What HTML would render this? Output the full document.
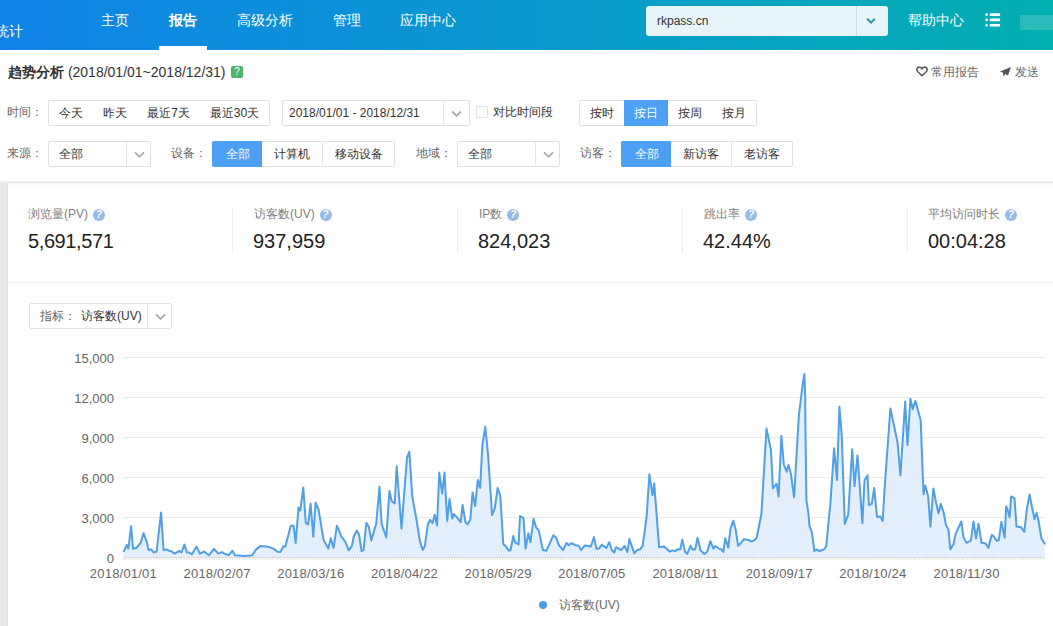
<!DOCTYPE html>
<html><head><meta charset="utf-8">
<style>
*{margin:0;padding:0;box-sizing:border-box}
html,body{width:1053px;height:626px;overflow:hidden;background:#fff;font-family:"Liberation Sans",sans-serif;color:#333}
.abs{position:absolute}
#hdr{position:absolute;left:0;top:0;width:1053px;height:50px;background:linear-gradient(90deg,#1083e8 0%,#0a99cf 50%,#02afb0 100%)}
.nav{position:absolute;top:11px;font-size:14px;line-height:18px;color:#fff;white-space:nowrap}
.ind{position:absolute;left:159px;top:46px;width:48px;height:4px;background:#fff}
#site{position:absolute;left:646px;top:6px;width:242px;height:30px;border-radius:3px;background:#e7f5f8}
#site .t{position:absolute;left:11px;top:8px;font-size:12px;line-height:15px;color:#333}
#site .dv{position:absolute;left:210px;top:0;width:1px;height:30px;background:#c9dfe3}
#filter{position:absolute;left:0;top:50px;width:1053px;height:132px;background:#fff}
.lbl{position:absolute;font-size:12px;line-height:16px;color:#666;white-space:nowrap}
.txt{position:absolute;font-size:12px;line-height:16px;color:#333;white-space:nowrap}
.box{position:absolute;border:1px solid #e1e1e1;border-radius:2px;background:#fff}
.act{position:absolute;background:#4ca0f5}
.sep{position:absolute;width:1px;background:#e6e6e6}
#grey{position:absolute;left:0;top:182px;width:8px;height:444px;background:#e9e9e9}
.card-l{position:absolute;top:206px;font-size:12px;line-height:16px;color:#808080;white-space:nowrap}
.card-v{position:absolute;top:229px;font-size:20px;line-height:24px;color:#222;white-space:nowrap}
.q{display:inline-block;width:12px;height:12px;border-radius:50%;background:#96bae6;vertical-align:-3px;margin-left:5px;position:relative}
.q:after{content:"?";position:absolute;left:0;top:0;width:12px;text-align:center;font-size:10px;line-height:12px;color:#fff;font-weight:bold}
.vd{position:absolute;top:208px;width:1px;height:45px;background:#eee}
.yl{position:absolute;right:939px;font-size:13px;line-height:15px;color:#666;text-align:right;white-space:nowrap}
.xl{position:absolute;top:566px;font-size:13px;line-height:15px;color:#666;white-space:nowrap;width:100px;text-align:center;letter-spacing:0.2px}
.grp{display:flex;border:none!important;background:none!important}
.grp span{display:block;height:26px;line-height:24px;text-align:center;font-size:12px;color:#333;white-space:nowrap;border-top:1px solid #e1e1e1;border-bottom:1px solid #e1e1e1;background:#fff}
.grp span:first-child{border-left:1px solid #e1e1e1;border-radius:2px 0 0 2px}
.grp span:last-child{border-right:1px solid #e1e1e1;border-radius:0 2px 2px 0}
.grp span.on{background:#4ca0f5;color:#fff;border-color:#4ca0f5}
.grp span.bl{border-left:1px solid #e6e6e6}
.grp span.on+span.bl{border-left:none}
</style></head><body>
<div id="hdr">
  <div class="nav" style="left:-5px;top:22px">统计</div>
  <div class="nav" style="left:101px">主页</div>
  <div class="nav" style="left:169px;font-weight:bold">报告</div>
  <div class="nav" style="left:237px">高级分析</div>
  <div class="nav" style="left:333px">管理</div>
  <div class="nav" style="left:400px">应用中心</div>
  <div class="ind"></div>
  <div id="site"><div class="t">rkpass.cn</div><div class="dv"></div>
    <svg class="abs" style="left:220px;top:11px" width="10" height="8" viewBox="0 0 10 8"><path d="M1.2 1.8 L5 5.6 L8.8 1.8" fill="none" stroke="#27999c" stroke-width="2"/></svg>
  </div>
  <div class="nav" style="left:908px">帮助中心</div>
  <svg class="abs" style="left:985px;top:13px" width="16" height="14" viewBox="0 0 16 14">
    <rect x="0.3" y="0.3" width="2.6" height="2.6" rx="1" fill="#fff"/><rect x="4.6" y="0.3" width="10.6" height="2.6" rx="1" fill="#fff"/>
    <rect x="0.3" y="5.6" width="2.6" height="2.6" rx="1" fill="#fff"/><rect x="4.6" y="5.6" width="10.6" height="2.6" rx="1" fill="#fff"/>
    <rect x="0.3" y="10.9" width="2.6" height="2.6" rx="1" fill="#fff"/><rect x="4.6" y="10.9" width="10.6" height="2.6" rx="1" fill="#fff"/>
  </svg>
  <div class="abs" style="left:1020px;top:15px;width:33px;height:15px;background:#2bbbbb"></div>
</div>

<div id="filter">
  <div class="abs" style="left:8px;top:13px;font-size:14px;line-height:18px;color:#333;white-space:nowrap"><b>趋势分析</b> (2018/01/01~2018/12/31)</div>
  <div class="abs" style="left:231px;top:16px;width:12px;height:12px;border-radius:2px;background:#4db36a;color:#fff;font-size:10px;line-height:12px;text-align:center">?</div>
  <svg class="abs" style="left:916px;top:16px" width="12" height="11" viewBox="0 0 12 11"><path d="M6 9.8 L1.6 5.5 C0.3 4.1 0.7 1.1 3.3 1.1 C4.6 1.1 5.5 2 6 2.9 C6.5 2 7.4 1.1 8.7 1.1 C11.3 1.1 11.7 4.1 10.4 5.5 Z" fill="none" stroke="#5a5a5a" stroke-width="1.6" stroke-linejoin="round"/></svg>
  <div class="lbl" style="left:931px;top:14px">常用报告</div>
  <svg class="abs" style="left:1000px;top:17px" width="11" height="10" viewBox="0 0 11 10"><path d="M11 0 L0 4.5 L3 5.8 L3.5 9.5 L5.3 7 L8 8.5 Z" fill="#555"/></svg>
  <div class="lbl" style="left:1015px;top:14px">发送</div>

  <!-- row1 -->
  <div class="lbl" style="left:7px;top:54px">时间：</div>
  <div class="box grp" style="left:48px;top:50px;width:222px;height:26px">
    <span style="width:45px">今天</span><span style="width:44px">昨天</span><span style="width:63px">最近7天</span><span style="width:70px">最近30天</span>
  </div>
  <div class="box" style="left:282px;top:50px;width:188px;height:26px">
    <div class="txt" style="left:6px;top:4px">2018/01/01 - 2018/12/31</div>
    <div class="sep" style="left:160px;top:0;height:24px"></div>
    <svg class="abs chev" style="left:168px;top:9px" width="11" height="8" viewBox="0 0 11 8"><path d="M1 1.3 L5.5 5.8 L10 1.3" fill="none" stroke="#a6a6a6" stroke-width="1.7"/></svg>
  </div>
  <div class="abs" style="left:476px;top:56px;width:12px;height:12px;border:1px solid #e3e3e3;border-radius:1px;background:#fff"></div>
  <div class="txt" style="left:493px;top:54px">对比时间段</div>
  <div class="box grp" style="left:579px;top:50px;width:178px;height:26px">
    <span style="width:45px">按时</span><span class="on" style="width:44px">按日</span><span style="width:44px">按周</span><span style="width:45px">按月</span>
  </div>
  <!-- row2 -->
  <div class="lbl" style="left:7px;top:95px">来源：</div>
  <div class="box" style="left:48px;top:91px;width:103px;height:26px">
    <div class="txt" style="left:10px;top:4px">全部</div>
    <div class="sep" style="left:77px;top:0;height:24px"></div>
    <svg class="abs chev" style="left:85px;top:9px" width="11" height="8" viewBox="0 0 11 8"><path d="M1 1.3 L5.5 5.8 L10 1.3" fill="none" stroke="#a6a6a6" stroke-width="1.7"/></svg>
  </div>
  <div class="lbl" style="left:171px;top:95px">设备：</div>
  <div class="box grp" style="left:212px;top:91px;width:183px;height:26px">
    <span class="on" style="width:50px">全部</span><span class="bl" style="width:60px">计算机</span><span class="bl" style="width:73px">移动设备</span>
  </div>
  <div class="lbl" style="left:416px;top:95px">地域：</div>
  <div class="box" style="left:457px;top:91px;width:103px;height:26px">
    <div class="txt" style="left:10px;top:4px">全部</div>
    <div class="sep" style="left:77px;top:0;height:24px"></div>
    <svg class="abs chev" style="left:85px;top:9px" width="11" height="8" viewBox="0 0 11 8"><path d="M1 1.3 L5.5 5.8 L10 1.3" fill="none" stroke="#a6a6a6" stroke-width="1.7"/></svg>
  </div>
  <div class="lbl" style="left:580px;top:95px">访客：</div>
  <div class="box grp" style="left:621px;top:91px;width:172px;height:26px">
    <span class="on" style="width:50px">全部</span><span class="bl" style="width:60px">新访客</span><span class="bl" style="width:62px">老访客</span>
  </div>
</div>
<div class="abs" style="left:0;top:181px;width:1053px;height:1px;background:#f3f3f3"></div>
<div class="abs" style="left:0;top:182px;width:1053px;height:1px;background:#e8e8e8"></div><div class="abs" style="left:8px;top:183px;width:1045px;height:2px;background:linear-gradient(#f6f6f6,#fcfcfc)"></div>
<div id="grey"></div>
<div class="abs" style="left:7px;top:184px;width:1px;height:442px;background:#e0e0e0"></div>

<!-- cards -->
<div class="card-l" style="left:28px">浏览量(PV)<i class="q"></i></div>
<div class="card-v" style="left:28px;letter-spacing:-0.4px">5,691,571</div>
<div class="vd" style="left:232px"></div>
<div class="card-l" style="left:254px">访客数(UV)<i class="q"></i></div>
<div class="card-v" style="left:253px">937,959</div>
<div class="vd" style="left:457px"></div>
<div class="card-l" style="left:479px">IP数<i class="q"></i></div>
<div class="card-v" style="left:478px">824,023</div>
<div class="vd" style="left:682px"></div>
<div class="card-l" style="left:704px">跳出率<i class="q"></i></div>
<div class="card-v" style="left:703px">42.44%</div>
<div class="vd" style="left:907px"></div>
<div class="card-l" style="left:928px">平均访问时长<i class="q"></i></div>
<div class="card-v" style="left:928px">00:04:28</div>
<div class="abs" style="left:8px;top:282px;width:1045px;height:1px;background:#efefef"></div>

<!-- chart -->
<svg class="abs" style="left:0;top:0" width="1053" height="626" viewBox="0 0 1053 626">
<line x1="123" y1="357.5" x2="1045" y2="357.5" stroke="#ececec" stroke-width="1"/><line x1="123" y1="397.5" x2="1045" y2="397.5" stroke="#ececec" stroke-width="1"/><line x1="123" y1="437.5" x2="1045" y2="437.5" stroke="#ececec" stroke-width="1"/><line x1="123" y1="477.5" x2="1045" y2="477.5" stroke="#ececec" stroke-width="1"/><line x1="123" y1="517.5" x2="1045" y2="517.5" stroke="#ececec" stroke-width="1"/>
<path d="M123.9 551.3 L126.7 544.8 L128.4 548.5 L131.1 526.2 L133.0 548.7 L136.3 548.0 L140.8 542.6 L143.5 533.2 L146.7 541.6 L148.5 550.0 L151.2 549.3 L153.6 552.5 L156.6 551.5 L161.1 512.4 L163.5 550.0 L167.0 549.5 L169.5 551.0 L172.0 551.5 L174.4 553.7 L179.4 551.0 L181.4 552.5 L184.5 544.6 L186.8 552.5 L189.3 552.5 L191.8 554.5 L196.5 546.5 L200.0 553.6 L204.1 551.5 L208.7 555.3 L214.1 549.0 L218.3 553.6 L222.0 552.2 L224.9 554.0 L229.0 554.9 L232.4 550.7 L234.9 555.3 L244.8 556.1 L252.3 555.3 L255.6 549.9 L260.6 545.9 L268.1 546.7 L273.5 548.6 L277.6 551.7 L280.4 552.1 L283.2 546.5 L285.3 546.5 L290.8 525.7 L293.6 525.7 L295.7 543.0 L298.5 507.6 L300.3 510.4 L303.3 487.5 L305.8 522.9 L308.2 524.3 L310.6 503.5 L313.3 536.8 L315.6 502.8 L318.6 509.7 L323.5 539.6 L328.3 548.6 L330.8 538.2 L333.6 547.9 L336.9 525.7 L341.5 536.8 L345.3 541.6 L348.7 550.4 L351.8 546.2 L353.8 536.5 L356.7 530.6 L359.0 534.5 L361.6 551.1 L363.5 550.1 L366.4 522.8 L368.8 526.7 L371.3 540.4 L376.2 523.8 L379.5 486.8 L381.6 523.8 L386.3 537.5 L389.4 491.1 L391.8 501.4 L394.7 503.4 L396.7 466.3 L401.5 528.7 L407.0 457.5 L409.3 451.7 L412.3 496.5 L416.2 518.0 L420.0 541.4 L422.7 549.9 L424.7 546.6 L427.9 524.3 L430.2 519.8 L432.5 523.2 L434.7 514.8 L437.0 525.4 L439.3 472.6 L442.2 493.7 L444.5 472.6 L447.2 520.9 L449.5 498.9 L452.2 518.6 L454.0 514.1 L460.8 522.0 L462.6 505.0 L465.4 522.0 L467.6 524.3 L470.3 519.8 L472.6 492.6 L475.1 506.2 L477.8 480.1 L480.1 488.0 L482.4 444.9 L485.3 426.8 L488.0 454.0 L492.1 515.2 L494.8 508.4 L497.6 488.1 L500.3 495.6 L503.3 544.4 L505.4 545.8 L508.9 550.7 L510.6 550.0 L513.3 536.1 L515.1 542.4 L518.6 544.4 L520.0 516.0 L523.5 518.1 L525.6 548.6 L528.3 533.3 L530.4 542.4 L533.6 518.8 L536.0 527.1 L538.8 530.6 L542.9 550.0 L546.4 550.7 L553.3 535.4 L556.1 537.5 L558.9 545.1 L563.1 550.0 L566.5 543.0 L568.6 545.1 L571.5 543.1 L576.2 545.6 L578.5 545.6 L581.2 550.0 L584.7 545.6 L590.9 546.4 L594.0 537.1 L596.4 548.7 L599.1 548.4 L601.8 544.8 L606.4 547.9 L609.2 542.2 L611.9 550.3 L614.2 552.6 L616.0 547.2 L621.2 550.0 L624.6 545.9 L627.4 552.1 L629.4 539.1 L634.3 553.4 L637.0 550.0 L639.8 549.5 L642.6 546.4 L646.7 516.2 L649.4 474.3 L652.5 495.2 L654.2 483.3 L659.1 547.2 L663.8 546.4 L667.0 549.0 L669.7 551.5 L672.6 550.4 L675.0 551.1 L677.8 549.2 L680.2 549.4 L682.3 539.7 L685.0 551.5 L687.3 553.9 L690.5 545.8 L692.5 549.6 L695.2 549.4 L697.5 537.8 L700.6 550.6 L704.4 553.9 L707.3 551.5 L710.4 541.1 L713.4 548.7 L715.3 546.0 L719.1 548.7 L721.0 548.9 L723.4 552.0 L725.3 538.2 L728.2 547.7 L730.5 528.7 L733.4 520.7 L735.7 529.7 L738.1 545.8 L741.0 543.0 L743.8 539.2 L748.6 539.9 L751.0 541.6 L753.8 540.6 L756.6 538.0 L759.5 523.5 L761.4 514.0 L766.5 428.6 L771.0 450.1 L772.9 488.5 L776.6 483.7 L778.6 496.5 L781.4 435.8 L783.8 464.5 L786.6 471.7 L788.5 464.8 L790.9 474.1 L794.1 497.3 L798.9 415.0 L802.7 384.2 L804.4 374.1 L805.2 396.6 L805.4 424.0 L806.4 500.0 L808.5 514.0 L809.4 525.7 L811.9 532.7 L814.4 551.0 L816.3 549.5 L819.3 551.0 L823.8 549.5 L826.2 546.5 L829.2 514.9 L830.3 505.4 L834.1 448.3 L837.0 480.0 L839.4 406.7 L841.7 435.1 L844.8 523.9 L848.2 514.7 L852.2 449.2 L854.5 486.1 L857.5 455.4 L862.4 523.3 L864.5 480.8 L867.5 475.2 L868.9 505.0 L871.8 503.8 L874.2 487.9 L877.0 517.0 L880.4 516.4 L882.7 521.0 L884.5 490.0 L890.4 408.4 L897.6 442.7 L900.4 475.5 L905.2 401.5 L907.5 445.1 L910.4 398.8 L912.7 409.2 L915.5 400.9 L920.7 420.4 L923.5 494.3 L925.3 485.4 L928.2 496.5 L930.4 526.6 L933.4 488.4 L936.3 503.8 L938.5 513.4 L940.7 503.8 L943.7 512.6 L945.9 525.1 L948.5 529.6 L950.3 549.4 L953.5 544.3 L955.4 534.7 L961.3 521.5 L963.5 537.6 L966.5 542.8 L970.9 540.6 L973.5 521.5 L976.0 538.4 L978.5 523.7 L981.5 542.8 L985.6 543.5 L988.4 548.0 L991.6 534.9 L993.5 536.1 L996.8 540.9 L998.8 540.3 L1001.4 521.9 L1004.7 537.7 L1006.2 506.2 L1007.9 510.8 L1009.6 517.4 L1011.2 496.4 L1014.5 498.3 L1016.5 526.5 L1021.0 527.2 L1024.3 531.8 L1026.9 508.8 L1029.6 494.4 L1032.2 508.2 L1034.5 519.3 L1036.5 512.8 L1038.5 520.6 L1041.4 538.3 L1044.6 543.6 L1044.6 557 L123.9 557 Z" fill="#e3effc" fill-opacity="1"/>
<g><line x1="123.5" y1="557" x2="123.5" y2="560" stroke="#e3e3e3" stroke-width="1"/><line x1="126.0" y1="557" x2="126.0" y2="560" stroke="#e3e3e3" stroke-width="1"/><line x1="128.6" y1="557" x2="128.6" y2="560" stroke="#e3e3e3" stroke-width="1"/><line x1="131.1" y1="557" x2="131.1" y2="560" stroke="#e3e3e3" stroke-width="1"/><line x1="133.6" y1="557" x2="133.6" y2="560" stroke="#e3e3e3" stroke-width="1"/><line x1="136.1" y1="557" x2="136.1" y2="560" stroke="#e3e3e3" stroke-width="1"/><line x1="138.7" y1="557" x2="138.7" y2="560" stroke="#e3e3e3" stroke-width="1"/><line x1="141.2" y1="557" x2="141.2" y2="560" stroke="#e3e3e3" stroke-width="1"/><line x1="143.7" y1="557" x2="143.7" y2="560" stroke="#e3e3e3" stroke-width="1"/><line x1="146.2" y1="557" x2="146.2" y2="560" stroke="#e3e3e3" stroke-width="1"/><line x1="148.8" y1="557" x2="148.8" y2="560" stroke="#e3e3e3" stroke-width="1"/><line x1="151.3" y1="557" x2="151.3" y2="560" stroke="#e3e3e3" stroke-width="1"/><line x1="153.8" y1="557" x2="153.8" y2="560" stroke="#e3e3e3" stroke-width="1"/><line x1="156.4" y1="557" x2="156.4" y2="560" stroke="#e3e3e3" stroke-width="1"/><line x1="158.9" y1="557" x2="158.9" y2="560" stroke="#e3e3e3" stroke-width="1"/><line x1="161.4" y1="557" x2="161.4" y2="560" stroke="#e3e3e3" stroke-width="1"/><line x1="163.9" y1="557" x2="163.9" y2="560" stroke="#e3e3e3" stroke-width="1"/><line x1="166.5" y1="557" x2="166.5" y2="560" stroke="#e3e3e3" stroke-width="1"/><line x1="169.0" y1="557" x2="169.0" y2="560" stroke="#e3e3e3" stroke-width="1"/><line x1="171.5" y1="557" x2="171.5" y2="560" stroke="#e3e3e3" stroke-width="1"/><line x1="174.0" y1="557" x2="174.0" y2="560" stroke="#e3e3e3" stroke-width="1"/><line x1="176.6" y1="557" x2="176.6" y2="560" stroke="#e3e3e3" stroke-width="1"/><line x1="179.1" y1="557" x2="179.1" y2="560" stroke="#e3e3e3" stroke-width="1"/><line x1="181.6" y1="557" x2="181.6" y2="560" stroke="#e3e3e3" stroke-width="1"/><line x1="184.1" y1="557" x2="184.1" y2="560" stroke="#e3e3e3" stroke-width="1"/><line x1="186.7" y1="557" x2="186.7" y2="560" stroke="#e3e3e3" stroke-width="1"/><line x1="189.2" y1="557" x2="189.2" y2="560" stroke="#e3e3e3" stroke-width="1"/><line x1="191.7" y1="557" x2="191.7" y2="560" stroke="#e3e3e3" stroke-width="1"/><line x1="194.3" y1="557" x2="194.3" y2="560" stroke="#e3e3e3" stroke-width="1"/><line x1="196.8" y1="557" x2="196.8" y2="560" stroke="#e3e3e3" stroke-width="1"/><line x1="199.3" y1="557" x2="199.3" y2="560" stroke="#e3e3e3" stroke-width="1"/><line x1="201.8" y1="557" x2="201.8" y2="560" stroke="#e3e3e3" stroke-width="1"/><line x1="204.4" y1="557" x2="204.4" y2="560" stroke="#e3e3e3" stroke-width="1"/><line x1="206.9" y1="557" x2="206.9" y2="560" stroke="#e3e3e3" stroke-width="1"/><line x1="209.4" y1="557" x2="209.4" y2="560" stroke="#e3e3e3" stroke-width="1"/><line x1="211.9" y1="557" x2="211.9" y2="560" stroke="#e3e3e3" stroke-width="1"/><line x1="214.5" y1="557" x2="214.5" y2="560" stroke="#e3e3e3" stroke-width="1"/><line x1="217.0" y1="557" x2="217.0" y2="560" stroke="#e3e3e3" stroke-width="1"/><line x1="219.5" y1="557" x2="219.5" y2="560" stroke="#e3e3e3" stroke-width="1"/><line x1="222.1" y1="557" x2="222.1" y2="560" stroke="#e3e3e3" stroke-width="1"/><line x1="224.6" y1="557" x2="224.6" y2="560" stroke="#e3e3e3" stroke-width="1"/><line x1="227.1" y1="557" x2="227.1" y2="560" stroke="#e3e3e3" stroke-width="1"/><line x1="229.6" y1="557" x2="229.6" y2="560" stroke="#e3e3e3" stroke-width="1"/><line x1="232.2" y1="557" x2="232.2" y2="560" stroke="#e3e3e3" stroke-width="1"/><line x1="234.7" y1="557" x2="234.7" y2="560" stroke="#e3e3e3" stroke-width="1"/><line x1="237.2" y1="557" x2="237.2" y2="560" stroke="#e3e3e3" stroke-width="1"/><line x1="239.7" y1="557" x2="239.7" y2="560" stroke="#e3e3e3" stroke-width="1"/><line x1="242.3" y1="557" x2="242.3" y2="560" stroke="#e3e3e3" stroke-width="1"/><line x1="244.8" y1="557" x2="244.8" y2="560" stroke="#e3e3e3" stroke-width="1"/><line x1="247.3" y1="557" x2="247.3" y2="560" stroke="#e3e3e3" stroke-width="1"/><line x1="249.9" y1="557" x2="249.9" y2="560" stroke="#e3e3e3" stroke-width="1"/><line x1="252.4" y1="557" x2="252.4" y2="560" stroke="#e3e3e3" stroke-width="1"/><line x1="254.9" y1="557" x2="254.9" y2="560" stroke="#e3e3e3" stroke-width="1"/><line x1="257.4" y1="557" x2="257.4" y2="560" stroke="#e3e3e3" stroke-width="1"/><line x1="260.0" y1="557" x2="260.0" y2="560" stroke="#e3e3e3" stroke-width="1"/><line x1="262.5" y1="557" x2="262.5" y2="560" stroke="#e3e3e3" stroke-width="1"/><line x1="265.0" y1="557" x2="265.0" y2="560" stroke="#e3e3e3" stroke-width="1"/><line x1="267.5" y1="557" x2="267.5" y2="560" stroke="#e3e3e3" stroke-width="1"/><line x1="270.1" y1="557" x2="270.1" y2="560" stroke="#e3e3e3" stroke-width="1"/><line x1="272.6" y1="557" x2="272.6" y2="560" stroke="#e3e3e3" stroke-width="1"/><line x1="275.1" y1="557" x2="275.1" y2="560" stroke="#e3e3e3" stroke-width="1"/><line x1="277.6" y1="557" x2="277.6" y2="560" stroke="#e3e3e3" stroke-width="1"/><line x1="280.2" y1="557" x2="280.2" y2="560" stroke="#e3e3e3" stroke-width="1"/><line x1="282.7" y1="557" x2="282.7" y2="560" stroke="#e3e3e3" stroke-width="1"/><line x1="285.2" y1="557" x2="285.2" y2="560" stroke="#e3e3e3" stroke-width="1"/><line x1="287.8" y1="557" x2="287.8" y2="560" stroke="#e3e3e3" stroke-width="1"/><line x1="290.3" y1="557" x2="290.3" y2="560" stroke="#e3e3e3" stroke-width="1"/><line x1="292.8" y1="557" x2="292.8" y2="560" stroke="#e3e3e3" stroke-width="1"/><line x1="295.3" y1="557" x2="295.3" y2="560" stroke="#e3e3e3" stroke-width="1"/><line x1="297.9" y1="557" x2="297.9" y2="560" stroke="#e3e3e3" stroke-width="1"/><line x1="300.4" y1="557" x2="300.4" y2="560" stroke="#e3e3e3" stroke-width="1"/><line x1="302.9" y1="557" x2="302.9" y2="560" stroke="#e3e3e3" stroke-width="1"/><line x1="305.4" y1="557" x2="305.4" y2="560" stroke="#e3e3e3" stroke-width="1"/><line x1="308.0" y1="557" x2="308.0" y2="560" stroke="#e3e3e3" stroke-width="1"/><line x1="310.5" y1="557" x2="310.5" y2="560" stroke="#e3e3e3" stroke-width="1"/><line x1="313.0" y1="557" x2="313.0" y2="560" stroke="#e3e3e3" stroke-width="1"/><line x1="315.6" y1="557" x2="315.6" y2="560" stroke="#e3e3e3" stroke-width="1"/><line x1="318.1" y1="557" x2="318.1" y2="560" stroke="#e3e3e3" stroke-width="1"/><line x1="320.6" y1="557" x2="320.6" y2="560" stroke="#e3e3e3" stroke-width="1"/><line x1="323.1" y1="557" x2="323.1" y2="560" stroke="#e3e3e3" stroke-width="1"/><line x1="325.7" y1="557" x2="325.7" y2="560" stroke="#e3e3e3" stroke-width="1"/><line x1="328.2" y1="557" x2="328.2" y2="560" stroke="#e3e3e3" stroke-width="1"/><line x1="330.7" y1="557" x2="330.7" y2="560" stroke="#e3e3e3" stroke-width="1"/><line x1="333.2" y1="557" x2="333.2" y2="560" stroke="#e3e3e3" stroke-width="1"/><line x1="335.8" y1="557" x2="335.8" y2="560" stroke="#e3e3e3" stroke-width="1"/><line x1="338.3" y1="557" x2="338.3" y2="560" stroke="#e3e3e3" stroke-width="1"/><line x1="340.8" y1="557" x2="340.8" y2="560" stroke="#e3e3e3" stroke-width="1"/><line x1="343.3" y1="557" x2="343.3" y2="560" stroke="#e3e3e3" stroke-width="1"/><line x1="345.9" y1="557" x2="345.9" y2="560" stroke="#e3e3e3" stroke-width="1"/><line x1="348.4" y1="557" x2="348.4" y2="560" stroke="#e3e3e3" stroke-width="1"/><line x1="350.9" y1="557" x2="350.9" y2="560" stroke="#e3e3e3" stroke-width="1"/><line x1="353.5" y1="557" x2="353.5" y2="560" stroke="#e3e3e3" stroke-width="1"/><line x1="356.0" y1="557" x2="356.0" y2="560" stroke="#e3e3e3" stroke-width="1"/><line x1="358.5" y1="557" x2="358.5" y2="560" stroke="#e3e3e3" stroke-width="1"/><line x1="361.0" y1="557" x2="361.0" y2="560" stroke="#e3e3e3" stroke-width="1"/><line x1="363.6" y1="557" x2="363.6" y2="560" stroke="#e3e3e3" stroke-width="1"/><line x1="366.1" y1="557" x2="366.1" y2="560" stroke="#e3e3e3" stroke-width="1"/><line x1="368.6" y1="557" x2="368.6" y2="560" stroke="#e3e3e3" stroke-width="1"/><line x1="371.1" y1="557" x2="371.1" y2="560" stroke="#e3e3e3" stroke-width="1"/><line x1="373.7" y1="557" x2="373.7" y2="560" stroke="#e3e3e3" stroke-width="1"/><line x1="376.2" y1="557" x2="376.2" y2="560" stroke="#e3e3e3" stroke-width="1"/><line x1="378.7" y1="557" x2="378.7" y2="560" stroke="#e3e3e3" stroke-width="1"/><line x1="381.3" y1="557" x2="381.3" y2="560" stroke="#e3e3e3" stroke-width="1"/><line x1="383.8" y1="557" x2="383.8" y2="560" stroke="#e3e3e3" stroke-width="1"/><line x1="386.3" y1="557" x2="386.3" y2="560" stroke="#e3e3e3" stroke-width="1"/><line x1="388.8" y1="557" x2="388.8" y2="560" stroke="#e3e3e3" stroke-width="1"/><line x1="391.4" y1="557" x2="391.4" y2="560" stroke="#e3e3e3" stroke-width="1"/><line x1="393.9" y1="557" x2="393.9" y2="560" stroke="#e3e3e3" stroke-width="1"/><line x1="396.4" y1="557" x2="396.4" y2="560" stroke="#e3e3e3" stroke-width="1"/><line x1="398.9" y1="557" x2="398.9" y2="560" stroke="#e3e3e3" stroke-width="1"/><line x1="401.5" y1="557" x2="401.5" y2="560" stroke="#e3e3e3" stroke-width="1"/><line x1="404.0" y1="557" x2="404.0" y2="560" stroke="#e3e3e3" stroke-width="1"/><line x1="406.5" y1="557" x2="406.5" y2="560" stroke="#e3e3e3" stroke-width="1"/><line x1="409.1" y1="557" x2="409.1" y2="560" stroke="#e3e3e3" stroke-width="1"/><line x1="411.6" y1="557" x2="411.6" y2="560" stroke="#e3e3e3" stroke-width="1"/><line x1="414.1" y1="557" x2="414.1" y2="560" stroke="#e3e3e3" stroke-width="1"/><line x1="416.6" y1="557" x2="416.6" y2="560" stroke="#e3e3e3" stroke-width="1"/><line x1="419.2" y1="557" x2="419.2" y2="560" stroke="#e3e3e3" stroke-width="1"/><line x1="421.7" y1="557" x2="421.7" y2="560" stroke="#e3e3e3" stroke-width="1"/><line x1="424.2" y1="557" x2="424.2" y2="560" stroke="#e3e3e3" stroke-width="1"/><line x1="426.7" y1="557" x2="426.7" y2="560" stroke="#e3e3e3" stroke-width="1"/><line x1="429.3" y1="557" x2="429.3" y2="560" stroke="#e3e3e3" stroke-width="1"/><line x1="431.8" y1="557" x2="431.8" y2="560" stroke="#e3e3e3" stroke-width="1"/><line x1="434.3" y1="557" x2="434.3" y2="560" stroke="#e3e3e3" stroke-width="1"/><line x1="436.8" y1="557" x2="436.8" y2="560" stroke="#e3e3e3" stroke-width="1"/><line x1="439.4" y1="557" x2="439.4" y2="560" stroke="#e3e3e3" stroke-width="1"/><line x1="441.9" y1="557" x2="441.9" y2="560" stroke="#e3e3e3" stroke-width="1"/><line x1="444.4" y1="557" x2="444.4" y2="560" stroke="#e3e3e3" stroke-width="1"/><line x1="447.0" y1="557" x2="447.0" y2="560" stroke="#e3e3e3" stroke-width="1"/><line x1="449.5" y1="557" x2="449.5" y2="560" stroke="#e3e3e3" stroke-width="1"/><line x1="452.0" y1="557" x2="452.0" y2="560" stroke="#e3e3e3" stroke-width="1"/><line x1="454.5" y1="557" x2="454.5" y2="560" stroke="#e3e3e3" stroke-width="1"/><line x1="457.1" y1="557" x2="457.1" y2="560" stroke="#e3e3e3" stroke-width="1"/><line x1="459.6" y1="557" x2="459.6" y2="560" stroke="#e3e3e3" stroke-width="1"/><line x1="462.1" y1="557" x2="462.1" y2="560" stroke="#e3e3e3" stroke-width="1"/><line x1="464.6" y1="557" x2="464.6" y2="560" stroke="#e3e3e3" stroke-width="1"/><line x1="467.2" y1="557" x2="467.2" y2="560" stroke="#e3e3e3" stroke-width="1"/><line x1="469.7" y1="557" x2="469.7" y2="560" stroke="#e3e3e3" stroke-width="1"/><line x1="472.2" y1="557" x2="472.2" y2="560" stroke="#e3e3e3" stroke-width="1"/><line x1="474.8" y1="557" x2="474.8" y2="560" stroke="#e3e3e3" stroke-width="1"/><line x1="477.3" y1="557" x2="477.3" y2="560" stroke="#e3e3e3" stroke-width="1"/><line x1="479.8" y1="557" x2="479.8" y2="560" stroke="#e3e3e3" stroke-width="1"/><line x1="482.3" y1="557" x2="482.3" y2="560" stroke="#e3e3e3" stroke-width="1"/><line x1="484.9" y1="557" x2="484.9" y2="560" stroke="#e3e3e3" stroke-width="1"/><line x1="487.4" y1="557" x2="487.4" y2="560" stroke="#e3e3e3" stroke-width="1"/><line x1="489.9" y1="557" x2="489.9" y2="560" stroke="#e3e3e3" stroke-width="1"/><line x1="492.4" y1="557" x2="492.4" y2="560" stroke="#e3e3e3" stroke-width="1"/><line x1="495.0" y1="557" x2="495.0" y2="560" stroke="#e3e3e3" stroke-width="1"/><line x1="497.5" y1="557" x2="497.5" y2="560" stroke="#e3e3e3" stroke-width="1"/><line x1="500.0" y1="557" x2="500.0" y2="560" stroke="#e3e3e3" stroke-width="1"/><line x1="502.6" y1="557" x2="502.6" y2="560" stroke="#e3e3e3" stroke-width="1"/><line x1="505.1" y1="557" x2="505.1" y2="560" stroke="#e3e3e3" stroke-width="1"/><line x1="507.6" y1="557" x2="507.6" y2="560" stroke="#e3e3e3" stroke-width="1"/><line x1="510.1" y1="557" x2="510.1" y2="560" stroke="#e3e3e3" stroke-width="1"/><line x1="512.7" y1="557" x2="512.7" y2="560" stroke="#e3e3e3" stroke-width="1"/><line x1="515.2" y1="557" x2="515.2" y2="560" stroke="#e3e3e3" stroke-width="1"/><line x1="517.7" y1="557" x2="517.7" y2="560" stroke="#e3e3e3" stroke-width="1"/><line x1="520.2" y1="557" x2="520.2" y2="560" stroke="#e3e3e3" stroke-width="1"/><line x1="522.8" y1="557" x2="522.8" y2="560" stroke="#e3e3e3" stroke-width="1"/><line x1="525.3" y1="557" x2="525.3" y2="560" stroke="#e3e3e3" stroke-width="1"/><line x1="527.8" y1="557" x2="527.8" y2="560" stroke="#e3e3e3" stroke-width="1"/><line x1="530.3" y1="557" x2="530.3" y2="560" stroke="#e3e3e3" stroke-width="1"/><line x1="532.9" y1="557" x2="532.9" y2="560" stroke="#e3e3e3" stroke-width="1"/><line x1="535.4" y1="557" x2="535.4" y2="560" stroke="#e3e3e3" stroke-width="1"/><line x1="537.9" y1="557" x2="537.9" y2="560" stroke="#e3e3e3" stroke-width="1"/><line x1="540.5" y1="557" x2="540.5" y2="560" stroke="#e3e3e3" stroke-width="1"/><line x1="543.0" y1="557" x2="543.0" y2="560" stroke="#e3e3e3" stroke-width="1"/><line x1="545.5" y1="557" x2="545.5" y2="560" stroke="#e3e3e3" stroke-width="1"/><line x1="548.0" y1="557" x2="548.0" y2="560" stroke="#e3e3e3" stroke-width="1"/><line x1="550.6" y1="557" x2="550.6" y2="560" stroke="#e3e3e3" stroke-width="1"/><line x1="553.1" y1="557" x2="553.1" y2="560" stroke="#e3e3e3" stroke-width="1"/><line x1="555.6" y1="557" x2="555.6" y2="560" stroke="#e3e3e3" stroke-width="1"/><line x1="558.1" y1="557" x2="558.1" y2="560" stroke="#e3e3e3" stroke-width="1"/><line x1="560.7" y1="557" x2="560.7" y2="560" stroke="#e3e3e3" stroke-width="1"/><line x1="563.2" y1="557" x2="563.2" y2="560" stroke="#e3e3e3" stroke-width="1"/><line x1="565.7" y1="557" x2="565.7" y2="560" stroke="#e3e3e3" stroke-width="1"/><line x1="568.3" y1="557" x2="568.3" y2="560" stroke="#e3e3e3" stroke-width="1"/><line x1="570.8" y1="557" x2="570.8" y2="560" stroke="#e3e3e3" stroke-width="1"/><line x1="573.3" y1="557" x2="573.3" y2="560" stroke="#e3e3e3" stroke-width="1"/><line x1="575.8" y1="557" x2="575.8" y2="560" stroke="#e3e3e3" stroke-width="1"/><line x1="578.4" y1="557" x2="578.4" y2="560" stroke="#e3e3e3" stroke-width="1"/><line x1="580.9" y1="557" x2="580.9" y2="560" stroke="#e3e3e3" stroke-width="1"/><line x1="583.4" y1="557" x2="583.4" y2="560" stroke="#e3e3e3" stroke-width="1"/><line x1="585.9" y1="557" x2="585.9" y2="560" stroke="#e3e3e3" stroke-width="1"/><line x1="588.5" y1="557" x2="588.5" y2="560" stroke="#e3e3e3" stroke-width="1"/><line x1="591.0" y1="557" x2="591.0" y2="560" stroke="#e3e3e3" stroke-width="1"/><line x1="593.5" y1="557" x2="593.5" y2="560" stroke="#e3e3e3" stroke-width="1"/><line x1="596.0" y1="557" x2="596.0" y2="560" stroke="#e3e3e3" stroke-width="1"/><line x1="598.6" y1="557" x2="598.6" y2="560" stroke="#e3e3e3" stroke-width="1"/><line x1="601.1" y1="557" x2="601.1" y2="560" stroke="#e3e3e3" stroke-width="1"/><line x1="603.6" y1="557" x2="603.6" y2="560" stroke="#e3e3e3" stroke-width="1"/><line x1="606.2" y1="557" x2="606.2" y2="560" stroke="#e3e3e3" stroke-width="1"/><line x1="608.7" y1="557" x2="608.7" y2="560" stroke="#e3e3e3" stroke-width="1"/><line x1="611.2" y1="557" x2="611.2" y2="560" stroke="#e3e3e3" stroke-width="1"/><line x1="613.7" y1="557" x2="613.7" y2="560" stroke="#e3e3e3" stroke-width="1"/><line x1="616.3" y1="557" x2="616.3" y2="560" stroke="#e3e3e3" stroke-width="1"/><line x1="618.8" y1="557" x2="618.8" y2="560" stroke="#e3e3e3" stroke-width="1"/><line x1="621.3" y1="557" x2="621.3" y2="560" stroke="#e3e3e3" stroke-width="1"/><line x1="623.8" y1="557" x2="623.8" y2="560" stroke="#e3e3e3" stroke-width="1"/><line x1="626.4" y1="557" x2="626.4" y2="560" stroke="#e3e3e3" stroke-width="1"/><line x1="628.9" y1="557" x2="628.9" y2="560" stroke="#e3e3e3" stroke-width="1"/><line x1="631.4" y1="557" x2="631.4" y2="560" stroke="#e3e3e3" stroke-width="1"/><line x1="634.0" y1="557" x2="634.0" y2="560" stroke="#e3e3e3" stroke-width="1"/><line x1="636.5" y1="557" x2="636.5" y2="560" stroke="#e3e3e3" stroke-width="1"/><line x1="639.0" y1="557" x2="639.0" y2="560" stroke="#e3e3e3" stroke-width="1"/><line x1="641.5" y1="557" x2="641.5" y2="560" stroke="#e3e3e3" stroke-width="1"/><line x1="644.1" y1="557" x2="644.1" y2="560" stroke="#e3e3e3" stroke-width="1"/><line x1="646.6" y1="557" x2="646.6" y2="560" stroke="#e3e3e3" stroke-width="1"/><line x1="649.1" y1="557" x2="649.1" y2="560" stroke="#e3e3e3" stroke-width="1"/><line x1="651.6" y1="557" x2="651.6" y2="560" stroke="#e3e3e3" stroke-width="1"/><line x1="654.2" y1="557" x2="654.2" y2="560" stroke="#e3e3e3" stroke-width="1"/><line x1="656.7" y1="557" x2="656.7" y2="560" stroke="#e3e3e3" stroke-width="1"/><line x1="659.2" y1="557" x2="659.2" y2="560" stroke="#e3e3e3" stroke-width="1"/><line x1="661.8" y1="557" x2="661.8" y2="560" stroke="#e3e3e3" stroke-width="1"/><line x1="664.3" y1="557" x2="664.3" y2="560" stroke="#e3e3e3" stroke-width="1"/><line x1="666.8" y1="557" x2="666.8" y2="560" stroke="#e3e3e3" stroke-width="1"/><line x1="669.3" y1="557" x2="669.3" y2="560" stroke="#e3e3e3" stroke-width="1"/><line x1="671.9" y1="557" x2="671.9" y2="560" stroke="#e3e3e3" stroke-width="1"/><line x1="674.4" y1="557" x2="674.4" y2="560" stroke="#e3e3e3" stroke-width="1"/><line x1="676.9" y1="557" x2="676.9" y2="560" stroke="#e3e3e3" stroke-width="1"/><line x1="679.4" y1="557" x2="679.4" y2="560" stroke="#e3e3e3" stroke-width="1"/><line x1="682.0" y1="557" x2="682.0" y2="560" stroke="#e3e3e3" stroke-width="1"/><line x1="684.5" y1="557" x2="684.5" y2="560" stroke="#e3e3e3" stroke-width="1"/><line x1="687.0" y1="557" x2="687.0" y2="560" stroke="#e3e3e3" stroke-width="1"/><line x1="689.5" y1="557" x2="689.5" y2="560" stroke="#e3e3e3" stroke-width="1"/><line x1="692.1" y1="557" x2="692.1" y2="560" stroke="#e3e3e3" stroke-width="1"/><line x1="694.6" y1="557" x2="694.6" y2="560" stroke="#e3e3e3" stroke-width="1"/><line x1="697.1" y1="557" x2="697.1" y2="560" stroke="#e3e3e3" stroke-width="1"/><line x1="699.7" y1="557" x2="699.7" y2="560" stroke="#e3e3e3" stroke-width="1"/><line x1="702.2" y1="557" x2="702.2" y2="560" stroke="#e3e3e3" stroke-width="1"/><line x1="704.7" y1="557" x2="704.7" y2="560" stroke="#e3e3e3" stroke-width="1"/><line x1="707.2" y1="557" x2="707.2" y2="560" stroke="#e3e3e3" stroke-width="1"/><line x1="709.8" y1="557" x2="709.8" y2="560" stroke="#e3e3e3" stroke-width="1"/><line x1="712.3" y1="557" x2="712.3" y2="560" stroke="#e3e3e3" stroke-width="1"/><line x1="714.8" y1="557" x2="714.8" y2="560" stroke="#e3e3e3" stroke-width="1"/><line x1="717.3" y1="557" x2="717.3" y2="560" stroke="#e3e3e3" stroke-width="1"/><line x1="719.9" y1="557" x2="719.9" y2="560" stroke="#e3e3e3" stroke-width="1"/><line x1="722.4" y1="557" x2="722.4" y2="560" stroke="#e3e3e3" stroke-width="1"/><line x1="724.9" y1="557" x2="724.9" y2="560" stroke="#e3e3e3" stroke-width="1"/><line x1="727.5" y1="557" x2="727.5" y2="560" stroke="#e3e3e3" stroke-width="1"/><line x1="730.0" y1="557" x2="730.0" y2="560" stroke="#e3e3e3" stroke-width="1"/><line x1="732.5" y1="557" x2="732.5" y2="560" stroke="#e3e3e3" stroke-width="1"/><line x1="735.0" y1="557" x2="735.0" y2="560" stroke="#e3e3e3" stroke-width="1"/><line x1="737.6" y1="557" x2="737.6" y2="560" stroke="#e3e3e3" stroke-width="1"/><line x1="740.1" y1="557" x2="740.1" y2="560" stroke="#e3e3e3" stroke-width="1"/><line x1="742.6" y1="557" x2="742.6" y2="560" stroke="#e3e3e3" stroke-width="1"/><line x1="745.1" y1="557" x2="745.1" y2="560" stroke="#e3e3e3" stroke-width="1"/><line x1="747.7" y1="557" x2="747.7" y2="560" stroke="#e3e3e3" stroke-width="1"/><line x1="750.2" y1="557" x2="750.2" y2="560" stroke="#e3e3e3" stroke-width="1"/><line x1="752.7" y1="557" x2="752.7" y2="560" stroke="#e3e3e3" stroke-width="1"/><line x1="755.2" y1="557" x2="755.2" y2="560" stroke="#e3e3e3" stroke-width="1"/><line x1="757.8" y1="557" x2="757.8" y2="560" stroke="#e3e3e3" stroke-width="1"/><line x1="760.3" y1="557" x2="760.3" y2="560" stroke="#e3e3e3" stroke-width="1"/><line x1="762.8" y1="557" x2="762.8" y2="560" stroke="#e3e3e3" stroke-width="1"/><line x1="765.4" y1="557" x2="765.4" y2="560" stroke="#e3e3e3" stroke-width="1"/><line x1="767.9" y1="557" x2="767.9" y2="560" stroke="#e3e3e3" stroke-width="1"/><line x1="770.4" y1="557" x2="770.4" y2="560" stroke="#e3e3e3" stroke-width="1"/><line x1="772.9" y1="557" x2="772.9" y2="560" stroke="#e3e3e3" stroke-width="1"/><line x1="775.5" y1="557" x2="775.5" y2="560" stroke="#e3e3e3" stroke-width="1"/><line x1="778.0" y1="557" x2="778.0" y2="560" stroke="#e3e3e3" stroke-width="1"/><line x1="780.5" y1="557" x2="780.5" y2="560" stroke="#e3e3e3" stroke-width="1"/><line x1="783.0" y1="557" x2="783.0" y2="560" stroke="#e3e3e3" stroke-width="1"/><line x1="785.6" y1="557" x2="785.6" y2="560" stroke="#e3e3e3" stroke-width="1"/><line x1="788.1" y1="557" x2="788.1" y2="560" stroke="#e3e3e3" stroke-width="1"/><line x1="790.6" y1="557" x2="790.6" y2="560" stroke="#e3e3e3" stroke-width="1"/><line x1="793.2" y1="557" x2="793.2" y2="560" stroke="#e3e3e3" stroke-width="1"/><line x1="795.7" y1="557" x2="795.7" y2="560" stroke="#e3e3e3" stroke-width="1"/><line x1="798.2" y1="557" x2="798.2" y2="560" stroke="#e3e3e3" stroke-width="1"/><line x1="800.7" y1="557" x2="800.7" y2="560" stroke="#e3e3e3" stroke-width="1"/><line x1="803.3" y1="557" x2="803.3" y2="560" stroke="#e3e3e3" stroke-width="1"/><line x1="805.8" y1="557" x2="805.8" y2="560" stroke="#e3e3e3" stroke-width="1"/><line x1="808.3" y1="557" x2="808.3" y2="560" stroke="#e3e3e3" stroke-width="1"/><line x1="810.8" y1="557" x2="810.8" y2="560" stroke="#e3e3e3" stroke-width="1"/><line x1="813.4" y1="557" x2="813.4" y2="560" stroke="#e3e3e3" stroke-width="1"/><line x1="815.9" y1="557" x2="815.9" y2="560" stroke="#e3e3e3" stroke-width="1"/><line x1="818.4" y1="557" x2="818.4" y2="560" stroke="#e3e3e3" stroke-width="1"/><line x1="821.0" y1="557" x2="821.0" y2="560" stroke="#e3e3e3" stroke-width="1"/><line x1="823.5" y1="557" x2="823.5" y2="560" stroke="#e3e3e3" stroke-width="1"/><line x1="826.0" y1="557" x2="826.0" y2="560" stroke="#e3e3e3" stroke-width="1"/><line x1="828.5" y1="557" x2="828.5" y2="560" stroke="#e3e3e3" stroke-width="1"/><line x1="831.1" y1="557" x2="831.1" y2="560" stroke="#e3e3e3" stroke-width="1"/><line x1="833.6" y1="557" x2="833.6" y2="560" stroke="#e3e3e3" stroke-width="1"/><line x1="836.1" y1="557" x2="836.1" y2="560" stroke="#e3e3e3" stroke-width="1"/><line x1="838.6" y1="557" x2="838.6" y2="560" stroke="#e3e3e3" stroke-width="1"/><line x1="841.2" y1="557" x2="841.2" y2="560" stroke="#e3e3e3" stroke-width="1"/><line x1="843.7" y1="557" x2="843.7" y2="560" stroke="#e3e3e3" stroke-width="1"/><line x1="846.2" y1="557" x2="846.2" y2="560" stroke="#e3e3e3" stroke-width="1"/><line x1="848.7" y1="557" x2="848.7" y2="560" stroke="#e3e3e3" stroke-width="1"/><line x1="851.3" y1="557" x2="851.3" y2="560" stroke="#e3e3e3" stroke-width="1"/><line x1="853.8" y1="557" x2="853.8" y2="560" stroke="#e3e3e3" stroke-width="1"/><line x1="856.3" y1="557" x2="856.3" y2="560" stroke="#e3e3e3" stroke-width="1"/><line x1="858.9" y1="557" x2="858.9" y2="560" stroke="#e3e3e3" stroke-width="1"/><line x1="861.4" y1="557" x2="861.4" y2="560" stroke="#e3e3e3" stroke-width="1"/><line x1="863.9" y1="557" x2="863.9" y2="560" stroke="#e3e3e3" stroke-width="1"/><line x1="866.4" y1="557" x2="866.4" y2="560" stroke="#e3e3e3" stroke-width="1"/><line x1="869.0" y1="557" x2="869.0" y2="560" stroke="#e3e3e3" stroke-width="1"/><line x1="871.5" y1="557" x2="871.5" y2="560" stroke="#e3e3e3" stroke-width="1"/><line x1="874.0" y1="557" x2="874.0" y2="560" stroke="#e3e3e3" stroke-width="1"/><line x1="876.5" y1="557" x2="876.5" y2="560" stroke="#e3e3e3" stroke-width="1"/><line x1="879.1" y1="557" x2="879.1" y2="560" stroke="#e3e3e3" stroke-width="1"/><line x1="881.6" y1="557" x2="881.6" y2="560" stroke="#e3e3e3" stroke-width="1"/><line x1="884.1" y1="557" x2="884.1" y2="560" stroke="#e3e3e3" stroke-width="1"/><line x1="886.7" y1="557" x2="886.7" y2="560" stroke="#e3e3e3" stroke-width="1"/><line x1="889.2" y1="557" x2="889.2" y2="560" stroke="#e3e3e3" stroke-width="1"/><line x1="891.7" y1="557" x2="891.7" y2="560" stroke="#e3e3e3" stroke-width="1"/><line x1="894.2" y1="557" x2="894.2" y2="560" stroke="#e3e3e3" stroke-width="1"/><line x1="896.8" y1="557" x2="896.8" y2="560" stroke="#e3e3e3" stroke-width="1"/><line x1="899.3" y1="557" x2="899.3" y2="560" stroke="#e3e3e3" stroke-width="1"/><line x1="901.8" y1="557" x2="901.8" y2="560" stroke="#e3e3e3" stroke-width="1"/><line x1="904.3" y1="557" x2="904.3" y2="560" stroke="#e3e3e3" stroke-width="1"/><line x1="906.9" y1="557" x2="906.9" y2="560" stroke="#e3e3e3" stroke-width="1"/><line x1="909.4" y1="557" x2="909.4" y2="560" stroke="#e3e3e3" stroke-width="1"/><line x1="911.9" y1="557" x2="911.9" y2="560" stroke="#e3e3e3" stroke-width="1"/><line x1="914.5" y1="557" x2="914.5" y2="560" stroke="#e3e3e3" stroke-width="1"/><line x1="917.0" y1="557" x2="917.0" y2="560" stroke="#e3e3e3" stroke-width="1"/><line x1="919.5" y1="557" x2="919.5" y2="560" stroke="#e3e3e3" stroke-width="1"/><line x1="922.0" y1="557" x2="922.0" y2="560" stroke="#e3e3e3" stroke-width="1"/><line x1="924.6" y1="557" x2="924.6" y2="560" stroke="#e3e3e3" stroke-width="1"/><line x1="927.1" y1="557" x2="927.1" y2="560" stroke="#e3e3e3" stroke-width="1"/><line x1="929.6" y1="557" x2="929.6" y2="560" stroke="#e3e3e3" stroke-width="1"/><line x1="932.1" y1="557" x2="932.1" y2="560" stroke="#e3e3e3" stroke-width="1"/><line x1="934.7" y1="557" x2="934.7" y2="560" stroke="#e3e3e3" stroke-width="1"/><line x1="937.2" y1="557" x2="937.2" y2="560" stroke="#e3e3e3" stroke-width="1"/><line x1="939.7" y1="557" x2="939.7" y2="560" stroke="#e3e3e3" stroke-width="1"/><line x1="942.2" y1="557" x2="942.2" y2="560" stroke="#e3e3e3" stroke-width="1"/><line x1="944.8" y1="557" x2="944.8" y2="560" stroke="#e3e3e3" stroke-width="1"/><line x1="947.3" y1="557" x2="947.3" y2="560" stroke="#e3e3e3" stroke-width="1"/><line x1="949.8" y1="557" x2="949.8" y2="560" stroke="#e3e3e3" stroke-width="1"/><line x1="952.4" y1="557" x2="952.4" y2="560" stroke="#e3e3e3" stroke-width="1"/><line x1="954.9" y1="557" x2="954.9" y2="560" stroke="#e3e3e3" stroke-width="1"/><line x1="957.4" y1="557" x2="957.4" y2="560" stroke="#e3e3e3" stroke-width="1"/><line x1="959.9" y1="557" x2="959.9" y2="560" stroke="#e3e3e3" stroke-width="1"/><line x1="962.5" y1="557" x2="962.5" y2="560" stroke="#e3e3e3" stroke-width="1"/><line x1="965.0" y1="557" x2="965.0" y2="560" stroke="#e3e3e3" stroke-width="1"/><line x1="967.5" y1="557" x2="967.5" y2="560" stroke="#e3e3e3" stroke-width="1"/><line x1="970.0" y1="557" x2="970.0" y2="560" stroke="#e3e3e3" stroke-width="1"/><line x1="972.6" y1="557" x2="972.6" y2="560" stroke="#e3e3e3" stroke-width="1"/><line x1="975.1" y1="557" x2="975.1" y2="560" stroke="#e3e3e3" stroke-width="1"/><line x1="977.6" y1="557" x2="977.6" y2="560" stroke="#e3e3e3" stroke-width="1"/><line x1="980.2" y1="557" x2="980.2" y2="560" stroke="#e3e3e3" stroke-width="1"/><line x1="982.7" y1="557" x2="982.7" y2="560" stroke="#e3e3e3" stroke-width="1"/><line x1="985.2" y1="557" x2="985.2" y2="560" stroke="#e3e3e3" stroke-width="1"/><line x1="987.7" y1="557" x2="987.7" y2="560" stroke="#e3e3e3" stroke-width="1"/><line x1="990.3" y1="557" x2="990.3" y2="560" stroke="#e3e3e3" stroke-width="1"/><line x1="992.8" y1="557" x2="992.8" y2="560" stroke="#e3e3e3" stroke-width="1"/><line x1="995.3" y1="557" x2="995.3" y2="560" stroke="#e3e3e3" stroke-width="1"/><line x1="997.8" y1="557" x2="997.8" y2="560" stroke="#e3e3e3" stroke-width="1"/><line x1="1000.4" y1="557" x2="1000.4" y2="560" stroke="#e3e3e3" stroke-width="1"/><line x1="1002.9" y1="557" x2="1002.9" y2="560" stroke="#e3e3e3" stroke-width="1"/><line x1="1005.4" y1="557" x2="1005.4" y2="560" stroke="#e3e3e3" stroke-width="1"/><line x1="1008.0" y1="557" x2="1008.0" y2="560" stroke="#e3e3e3" stroke-width="1"/><line x1="1010.5" y1="557" x2="1010.5" y2="560" stroke="#e3e3e3" stroke-width="1"/><line x1="1013.0" y1="557" x2="1013.0" y2="560" stroke="#e3e3e3" stroke-width="1"/><line x1="1015.5" y1="557" x2="1015.5" y2="560" stroke="#e3e3e3" stroke-width="1"/><line x1="1018.1" y1="557" x2="1018.1" y2="560" stroke="#e3e3e3" stroke-width="1"/><line x1="1020.6" y1="557" x2="1020.6" y2="560" stroke="#e3e3e3" stroke-width="1"/><line x1="1023.1" y1="557" x2="1023.1" y2="560" stroke="#e3e3e3" stroke-width="1"/><line x1="1025.6" y1="557" x2="1025.6" y2="560" stroke="#e3e3e3" stroke-width="1"/><line x1="1028.2" y1="557" x2="1028.2" y2="560" stroke="#e3e3e3" stroke-width="1"/><line x1="1030.7" y1="557" x2="1030.7" y2="560" stroke="#e3e3e3" stroke-width="1"/><line x1="1033.2" y1="557" x2="1033.2" y2="560" stroke="#e3e3e3" stroke-width="1"/><line x1="1035.7" y1="557" x2="1035.7" y2="560" stroke="#e3e3e3" stroke-width="1"/><line x1="1038.3" y1="557" x2="1038.3" y2="560" stroke="#e3e3e3" stroke-width="1"/><line x1="1040.8" y1="557" x2="1040.8" y2="560" stroke="#e3e3e3" stroke-width="1"/><line x1="1043.3" y1="557" x2="1043.3" y2="560" stroke="#e3e3e3" stroke-width="1"/></g>
<line x1="123" y1="557.5" x2="1045" y2="557.5" stroke="#dcdcdc" stroke-width="1"/>
<path d="M123.9 551.3 L126.7 544.8 L128.4 548.5 L131.1 526.2 L133.0 548.7 L136.3 548.0 L140.8 542.6 L143.5 533.2 L146.7 541.6 L148.5 550.0 L151.2 549.3 L153.6 552.5 L156.6 551.5 L161.1 512.4 L163.5 550.0 L167.0 549.5 L169.5 551.0 L172.0 551.5 L174.4 553.7 L179.4 551.0 L181.4 552.5 L184.5 544.6 L186.8 552.5 L189.3 552.5 L191.8 554.5 L196.5 546.5 L200.0 553.6 L204.1 551.5 L208.7 555.3 L214.1 549.0 L218.3 553.6 L222.0 552.2 L224.9 554.0 L229.0 554.9 L232.4 550.7 L234.9 555.3 L244.8 556.1 L252.3 555.3 L255.6 549.9 L260.6 545.9 L268.1 546.7 L273.5 548.6 L277.6 551.7 L280.4 552.1 L283.2 546.5 L285.3 546.5 L290.8 525.7 L293.6 525.7 L295.7 543.0 L298.5 507.6 L300.3 510.4 L303.3 487.5 L305.8 522.9 L308.2 524.3 L310.6 503.5 L313.3 536.8 L315.6 502.8 L318.6 509.7 L323.5 539.6 L328.3 548.6 L330.8 538.2 L333.6 547.9 L336.9 525.7 L341.5 536.8 L345.3 541.6 L348.7 550.4 L351.8 546.2 L353.8 536.5 L356.7 530.6 L359.0 534.5 L361.6 551.1 L363.5 550.1 L366.4 522.8 L368.8 526.7 L371.3 540.4 L376.2 523.8 L379.5 486.8 L381.6 523.8 L386.3 537.5 L389.4 491.1 L391.8 501.4 L394.7 503.4 L396.7 466.3 L401.5 528.7 L407.0 457.5 L409.3 451.7 L412.3 496.5 L416.2 518.0 L420.0 541.4 L422.7 549.9 L424.7 546.6 L427.9 524.3 L430.2 519.8 L432.5 523.2 L434.7 514.8 L437.0 525.4 L439.3 472.6 L442.2 493.7 L444.5 472.6 L447.2 520.9 L449.5 498.9 L452.2 518.6 L454.0 514.1 L460.8 522.0 L462.6 505.0 L465.4 522.0 L467.6 524.3 L470.3 519.8 L472.6 492.6 L475.1 506.2 L477.8 480.1 L480.1 488.0 L482.4 444.9 L485.3 426.8 L488.0 454.0 L492.1 515.2 L494.8 508.4 L497.6 488.1 L500.3 495.6 L503.3 544.4 L505.4 545.8 L508.9 550.7 L510.6 550.0 L513.3 536.1 L515.1 542.4 L518.6 544.4 L520.0 516.0 L523.5 518.1 L525.6 548.6 L528.3 533.3 L530.4 542.4 L533.6 518.8 L536.0 527.1 L538.8 530.6 L542.9 550.0 L546.4 550.7 L553.3 535.4 L556.1 537.5 L558.9 545.1 L563.1 550.0 L566.5 543.0 L568.6 545.1 L571.5 543.1 L576.2 545.6 L578.5 545.6 L581.2 550.0 L584.7 545.6 L590.9 546.4 L594.0 537.1 L596.4 548.7 L599.1 548.4 L601.8 544.8 L606.4 547.9 L609.2 542.2 L611.9 550.3 L614.2 552.6 L616.0 547.2 L621.2 550.0 L624.6 545.9 L627.4 552.1 L629.4 539.1 L634.3 553.4 L637.0 550.0 L639.8 549.5 L642.6 546.4 L646.7 516.2 L649.4 474.3 L652.5 495.2 L654.2 483.3 L659.1 547.2 L663.8 546.4 L667.0 549.0 L669.7 551.5 L672.6 550.4 L675.0 551.1 L677.8 549.2 L680.2 549.4 L682.3 539.7 L685.0 551.5 L687.3 553.9 L690.5 545.8 L692.5 549.6 L695.2 549.4 L697.5 537.8 L700.6 550.6 L704.4 553.9 L707.3 551.5 L710.4 541.1 L713.4 548.7 L715.3 546.0 L719.1 548.7 L721.0 548.9 L723.4 552.0 L725.3 538.2 L728.2 547.7 L730.5 528.7 L733.4 520.7 L735.7 529.7 L738.1 545.8 L741.0 543.0 L743.8 539.2 L748.6 539.9 L751.0 541.6 L753.8 540.6 L756.6 538.0 L759.5 523.5 L761.4 514.0 L766.5 428.6 L771.0 450.1 L772.9 488.5 L776.6 483.7 L778.6 496.5 L781.4 435.8 L783.8 464.5 L786.6 471.7 L788.5 464.8 L790.9 474.1 L794.1 497.3 L798.9 415.0 L802.7 384.2 L804.4 374.1 L805.2 396.6 L805.4 424.0 L806.4 500.0 L808.5 514.0 L809.4 525.7 L811.9 532.7 L814.4 551.0 L816.3 549.5 L819.3 551.0 L823.8 549.5 L826.2 546.5 L829.2 514.9 L830.3 505.4 L834.1 448.3 L837.0 480.0 L839.4 406.7 L841.7 435.1 L844.8 523.9 L848.2 514.7 L852.2 449.2 L854.5 486.1 L857.5 455.4 L862.4 523.3 L864.5 480.8 L867.5 475.2 L868.9 505.0 L871.8 503.8 L874.2 487.9 L877.0 517.0 L880.4 516.4 L882.7 521.0 L884.5 490.0 L890.4 408.4 L897.6 442.7 L900.4 475.5 L905.2 401.5 L907.5 445.1 L910.4 398.8 L912.7 409.2 L915.5 400.9 L920.7 420.4 L923.5 494.3 L925.3 485.4 L928.2 496.5 L930.4 526.6 L933.4 488.4 L936.3 503.8 L938.5 513.4 L940.7 503.8 L943.7 512.6 L945.9 525.1 L948.5 529.6 L950.3 549.4 L953.5 544.3 L955.4 534.7 L961.3 521.5 L963.5 537.6 L966.5 542.8 L970.9 540.6 L973.5 521.5 L976.0 538.4 L978.5 523.7 L981.5 542.8 L985.6 543.5 L988.4 548.0 L991.6 534.9 L993.5 536.1 L996.8 540.9 L998.8 540.3 L1001.4 521.9 L1004.7 537.7 L1006.2 506.2 L1007.9 510.8 L1009.6 517.4 L1011.2 496.4 L1014.5 498.3 L1016.5 526.5 L1021.0 527.2 L1024.3 531.8 L1026.9 508.8 L1029.6 494.4 L1032.2 508.2 L1034.5 519.3 L1036.5 512.8 L1038.5 520.6 L1041.4 538.3 L1044.6 543.6" fill="none" stroke="#519fe6" stroke-width="2" stroke-linejoin="round" stroke-linecap="round"/>
</svg>
<div class="yl" style="top:351px">15,000</div><div class="yl" style="top:391px">12,000</div><div class="yl" style="top:431px">9,000</div><div class="yl" style="top:471px">6,000</div><div class="yl" style="top:511px">3,000</div><div class="yl" style="top:551px">0</div>
<div class="xl" style="left:73.4px">2018/01/01</div><div class="xl" style="left:167.1px">2018/02/07</div><div class="xl" style="left:260.8px">2018/03/16</div><div class="xl" style="left:354.5px">2018/04/22</div><div class="xl" style="left:448.1px">2018/05/29</div><div class="xl" style="left:541.8px">2018/07/05</div><div class="xl" style="left:635.5px">2018/08/11</div><div class="xl" style="left:729.2px">2018/09/17</div><div class="xl" style="left:822.9px">2018/10/24</div><div class="xl" style="left:916.6px">2018/11/30</div>
<!-- indicator select -->
<div class="box" style="left:29px;top:303px;width:143px;height:26px">
  <div class="lbl" style="left:10px;top:4px">指标：</div>
  <div class="txt" style="left:51px;top:4px">访客数(UV)</div>
  <div class="sep" style="left:117px;top:0;height:24px"></div>
  <svg class="abs chev" style="left:125px;top:9px" width="11" height="8" viewBox="0 0 11 8"><path d="M1 1.3 L5.5 5.8 L10 1.3" fill="none" stroke="#a6a6a6" stroke-width="1.7"/></svg>
</div>
<!-- legend -->
<div class="abs" style="left:539px;top:601px;width:8px;height:8px;border-radius:50%;background:#4d9de0"></div>
<div class="lbl" style="left:559px;top:597px">访客数(UV)</div>
</body></html>
